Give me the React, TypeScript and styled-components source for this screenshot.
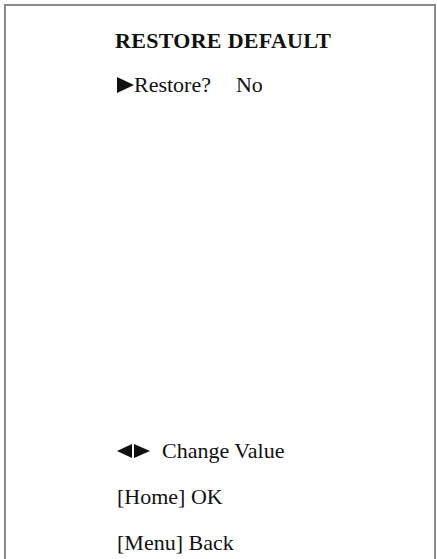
import React from "react";
import styled, { createGlobalStyle } from "styled-components";

const GlobalStyle = createGlobalStyle`
  html, body {
    margin: 0;
    padding: 0;
    background: #ffffff;
  }
  body {
    font-family: "Liberation Serif", "Times New Roman", serif;
    color: #111111;
    overflow: hidden;
  }
`;

const Page = styled.div`
  width: 437px;
  height: 559px;
  padding: 4px 1px 0 4px;
  box-sizing: border-box;
  overflow: hidden;
`;

const Frame = styled.div`
  display: flex;
  flex-direction: column;
  height: 570px;
  border: 2px solid #8a8a8a;
  border-bottom: none;
  padding: 0 0 0 111px;
  box-sizing: border-box;
`;

const Title = styled.h1`
  margin: 21px 0 0 -2px;
  font-size: 22px;
  font-weight: bold;
  line-height: 28px;
  letter-spacing: 0.3px;
`;

const Row = styled.div`
  display: flex;
  align-items: center;
  font-size: 22px;
  line-height: 28px;
`;

const OptionRow = styled(Row)`
  margin-top: 16px;
`;

const Value = styled.span`
  margin-left: 25px;
`;

const Spacer = styled.div`
  flex: 1;
`;

const Hints = styled.div`
  display: flex;
  flex-direction: column;
  gap: 18px;
  margin-bottom: 17px;
`;

const Arrow = styled.svg`
  display: block;
  flex: none;
`;

const ArrowRight = () => (
  <Arrow width="17" height="16" viewBox="0 0 17 16">
    <polygon points="0,0 17,8 0,16" fill="#111111" />
  </Arrow>
);

const ArrowsLeftRight = () => (
  <Arrow width="34" height="14" viewBox="0 0 34 14" style={{ marginRight: 11 }}>
    <polygon points="15,0 15,14 0,7" fill="#111111" />
    <polygon points="17,0 17,14 33,7" fill="#111111" />
  </Arrow>
);

export default function App() {
  return (
    <>
      <GlobalStyle />
      <Page>
        <Frame>
          <Title>RESTORE DEFAULT</Title>
          <OptionRow>
            <ArrowRight />
            <span>Restore?</span>
            <Value>No</Value>
          </OptionRow>
          <Spacer />
          <Hints>
            <Row>
              <ArrowsLeftRight />
              <span>Change Value</span>
            </Row>
            <Row>[Home] OK</Row>
            <Row>[Menu] Back</Row>
          </Hints>
        </Frame>
      </Page>
    </>
  );
}
